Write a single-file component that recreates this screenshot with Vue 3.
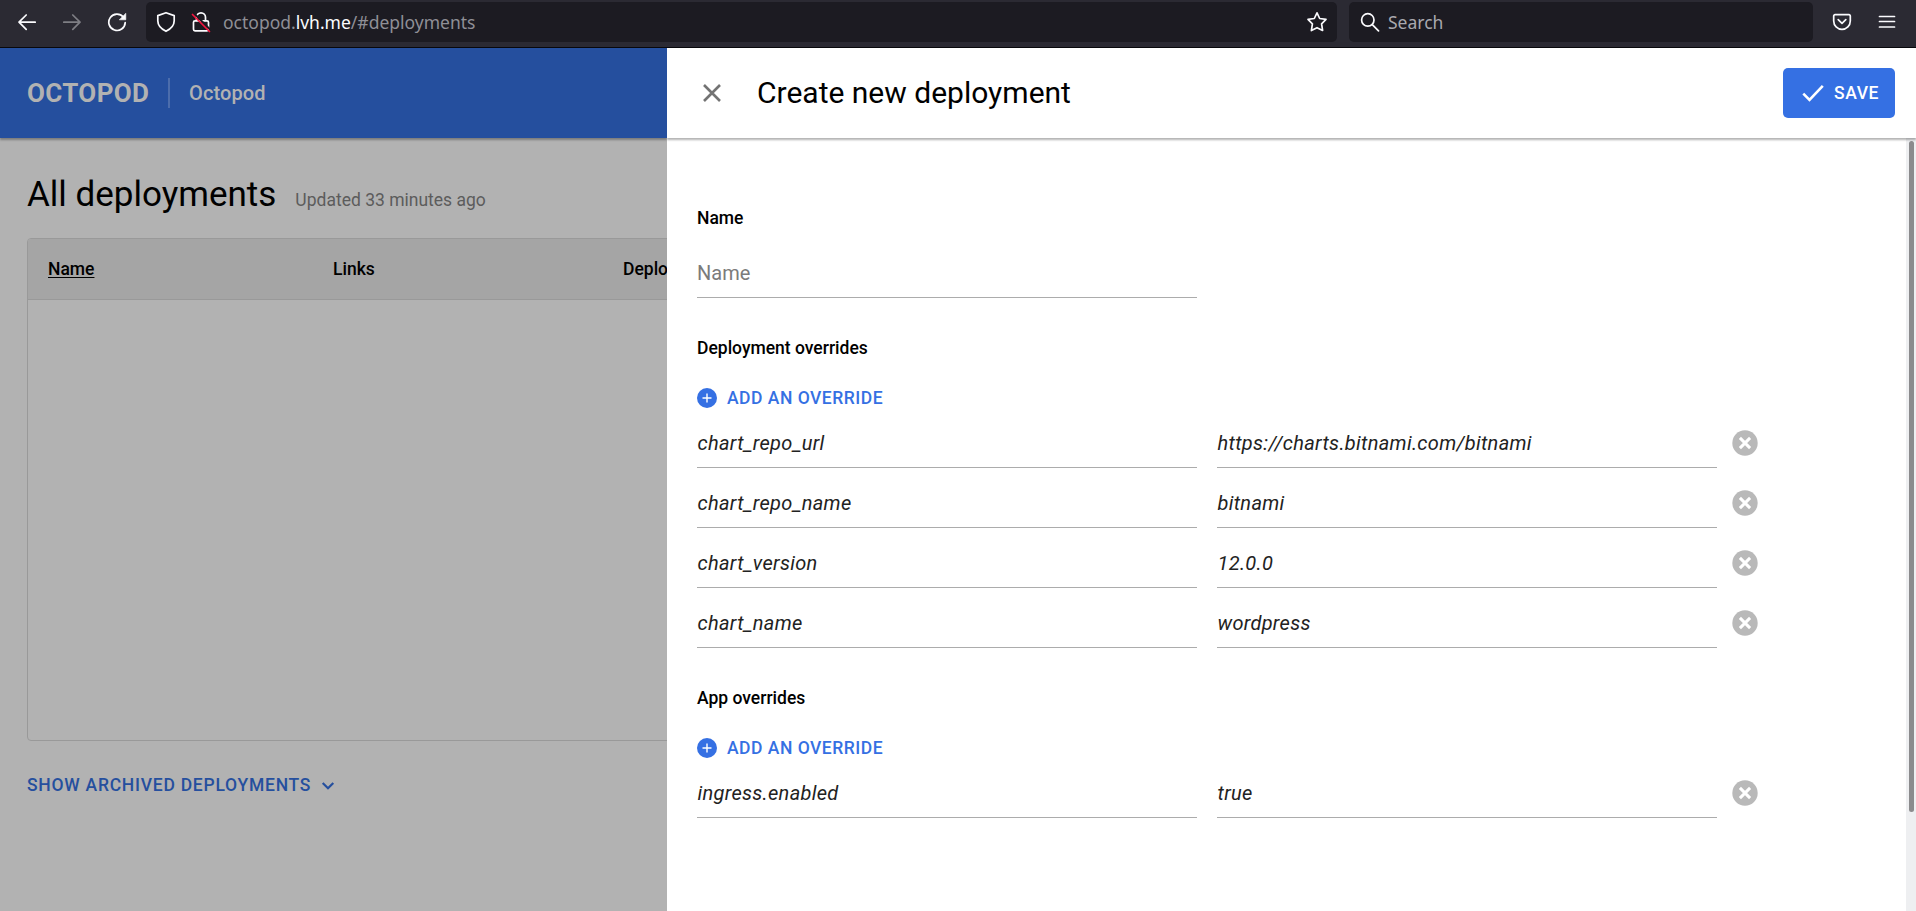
<script setup>
const columns = ['Name', 'Links', 'Deplo']

const sections = [
  {
    title: 'Deployment overrides',
    rows: [
      { key: 'chart_repo_url', value: 'https://charts.bitnami.com/bitnami' },
      { key: 'chart_repo_name', value: 'bitnami' },
      { key: 'chart_version', value: '12.0.0' },
      { key: 'chart_name', value: 'wordpress' },
    ],
  },
  {
    title: 'App overrides',
    rows: [{ key: 'ingress.enabled', value: 'true' }],
  },
]
</script>

<template>
  <div class="window">
    <div class="toolbar">
      <div class="nav">
        <svg width="20" height="20" viewBox="0 0 20 20"><path d="M18.2 10.2H2.2M9.2 3L2 10.2l7.200 7.200" /></svg>
        <svg class="faded" width="20" height="20" viewBox="0 0 20 20"><path d="M1.800 10.200h16M10.800 3l7.200 7.200-7.200 7.200" /></svg>
        <svg width="20" height="20" viewBox="0 0 20 20">
          <path d="M16.300 5A8.200 8.200 0 1 0 18.200 10.600" />
          <path class="solid" d="M18.800 1.600v6.200h-6.200z" />
        </svg>
      </div>
      <div class="urlbar">
        <svg width="20" height="22" viewBox="0 0 20 22"><path d="M10 1.700L18.200 4.600v5.200c0 5-3.600 8.300-8.200 10.500-4.600-2.200-8.200-5.500-8.200-10.500V4.600z" /></svg>
        <svg class="lock" width="20" height="22" viewBox="0 0 20 22">
          <path d="M5.500 9.500V6.300a4.500 4.500 0 0 1 9 0v3.200" />
          <rect x="2.500" y="9.800" width="15" height="10" rx="1.500" />
          <path class="halo" d="M3.400 2.700l17 17" />
          <path class="slash" d="M1.500 3.500l17 17" />
        </svg>
        <span class="url">octopod.<b>lvh.me</b>/#deployments</span>
        <svg class="star" width="22" height="22" viewBox="0 0 22 22"><path d="M11 1.800l2.700 5.700 6.300.9-4.400 4.400 1 6.700L11 16.700l-5.600 2.800 1-6.700L2 8.400l6.300-.9z" /></svg>
      </div>
      <div class="searchbar">
        <svg width="20" height="20" viewBox="0 0 20 20"><circle cx="7.800" cy="7.900" r="6.200" /><path d="M12.300 12.600l6.200 6.300" /></svg>
        <span>Search</span>
      </div>
      <svg class="pocket" width="20" height="18" viewBox="0 0 20 18">
        <path d="M3 1.700h14a1.300 1.300 0 0 1 1.300 1.300v5a8.300 8.300 0 0 1-16.600 0V3A1.300 1.300 0 0 1 3 1.700z" />
        <path d="M6.200 6.700l3.800 3.600 3.800-3.600" />
      </svg>
      <svg class="menu" width="18" height="14" viewBox="0 0 18 14"><path d="M1.500 1.500h15M1.500 6.500h15M1.500 12h15" /></svg>
    </div>

    <div class="body">
      <main class="page">
        <header class="brand">
          <span class="logo">OCTOPOD</span>
          <span class="project">Octopod</span>
        </header>
        <div class="content">
          <div class="heading">
            <h1>All deployments</h1>
            <span>Updated 33 minutes ago</span>
          </div>
          <div class="table">
            <div class="thead">
              <span v-for="(c, i) in columns" :key="c" :class="{ sorted: i === 0 }">{{ c }}</span>
            </div>
          </div>
          <div class="archived">
            SHOW ARCHIVED DEPLOYMENTS
            <svg width="14" height="10" viewBox="0 0 14 10"><path d="M1.700 2l5.300 5.300L12.300 2" /></svg>
          </div>
        </div>
      </main>

      <aside class="drawer">
        <header class="drawer-head">
          <svg class="close" width="20" height="20" viewBox="0 0 20 20"><path d="M2 2l16 16M18 2L2 18" /></svg>
          <h2>Create new deployment</h2>
          <button class="save">
            <svg width="24" height="20" viewBox="0 0 24 20"><path d="M2.300 10.600l6.200 6.200L21.800 2.800" /></svg>
            <span>SAVE</span>
          </button>
        </header>
        <div class="drawer-body">
          <div class="form">
            <h3>Name</h3>
            <div class="field empty">Name</div>
            <section v-for="s in sections" :key="s.title">
              <h3>{{ s.title }}</h3>
              <div class="add">
                <svg width="20" height="20" viewBox="0 0 20 20"><circle cx="10" cy="10" r="10" /><path d="M10 5.500v9M5.500 10h9" /></svg>
                <span>ADD AN OVERRIDE</span>
              </div>
              <div v-for="r in s.rows" :key="r.key" class="row">
                <div class="field">{{ r.key }}</div>
                <div class="field">{{ r.value }}</div>
                <svg width="26" height="26" viewBox="0 0 26 26"><circle cx="13" cy="13" r="12.700" /><path d="M7.900 7.900l10.200 10.200M18.100 7.900L7.900 18.100" /></svg>
              </div>
            </section>
          </div>
          <div class="track"><div class="thumb"></div></div>
        </div>
      </aside>
    </div>
  </div>
</template>

<style>
body { overflow: hidden; }
</style>

<style scoped>
* { box-sizing: border-box; }
h1, h2, h3 { margin: 0; }
svg { flex: none; fill: none; }
.window { width: 1916px; height: 911px; display: flex; flex-direction: column; font-family: Roboto, "Liberation Sans", sans-serif; overflow: hidden; }

.toolbar { height: 48px; flex: none; display: flex; align-items: flex-start; padding-top: 2px; background: #2b2a33; border-bottom: 1px solid #08080c; font-family: "Noto Sans", sans-serif; font-size: 17.500px; }
.toolbar svg { stroke: #fbfbfe; stroke-width: 1.700; stroke-linejoin: round; stroke-linecap: round; }
.nav { width: 146px; height: 40px; padding-left: 17px; display: flex; align-items: center; gap: 25px; }
.toolbar svg.faded { opacity: .4; }
.toolbar svg .solid { fill: #fbfbfe; stroke-width: .6; }
.urlbar { width: 1191px; height: 40px; background: #1c1b22; border-radius: 5px; display: flex; align-items: center; padding: 0 9px 0 10px; margin-right: 12px; }
.lock { margin-left: 15px; }
.toolbar svg .halo { stroke: #1c1b22; stroke-width: 2; }
.toolbar svg .slash { stroke: #f5143f; stroke-width: 1.700; }
.url { margin-left: 12px; color: #8f8f96; }
.url b { font-weight: 400; color: #fbfbfe; }
.star { margin-left: auto; }
.searchbar { width: 464px; height: 40px; background: #1c1b22; border-radius: 5px; display: flex; align-items: center; gap: 8px; padding-left: 11px; color: #a9a9af; }
.pocket { margin: 11px 0 0 19px; }
.menu { margin: 13px 0 0 26px; }

.body { flex: 1; min-height: 0; display: flex; }
.page { width: 667px; flex: none; background: #b2b2b2; overflow: hidden; }
.brand { height: 90px; background: #254f9e; box-shadow: 0 2px 2px rgba(0, 0, 0, .3); display: flex; align-items: center; padding-left: 27px; color: #b2b2b2; }
.logo { font-size: 26px; font-weight: 700; letter-spacing: .35px; width: 141px; }
.project { height: 30px; line-height: 30px; border-left: 2px solid #4c6dac; padding-left: 19px; font-size: 20px; font-weight: 500; letter-spacing: .1px; }
.content { padding-left: 27px; }
.heading { height: 100px; padding-top: 35px; display: flex; align-items: baseline; gap: 19px; }
.heading h1 { font-size: 35px; line-height: 43px; font-weight: 400; }
.heading span { font-size: 17.500px; color: #5c5c5c; }
.table { width: 1862px; height: 503px; border: 1px solid #999; border-radius: 4px; overflow: hidden; }
.thead { height: 61px; background: #a5a5a5; border-bottom: 1px solid #999; display: grid; grid-template-columns: 285px 290px 300px; align-items: center; padding: 0 0 1px 20px; font-size: 17.500px; font-weight: 500; }
.sorted { text-decoration: underline; text-underline-offset: 2px; }
.archived { margin-top: 34px; display: flex; align-items: center; gap: 10px; font-size: 17.500px; line-height: 21px; font-weight: 500; letter-spacing: .75px; color: #254f9e; }
.archived svg { stroke: #254f9e; stroke-width: 2.200; }

.drawer { flex: 1; background: #fff; display: flex; flex-direction: column; overflow: hidden; }
.drawer-head { height: 90px; flex: none; display: flex; align-items: center; padding: 0 21px 0 35px; box-shadow: 0 2px 2px rgba(0, 0, 0, .3); position: relative; }
.close { stroke: #737373; stroke-width: 2.600; }
.drawer-head h2 { margin-left: 35px; padding-bottom: 2px; font-size: 30px; font-weight: 400; }
.save { margin-left: auto; width: 112px; height: 50px; border: 0; border-radius: 5px; background: #3570e3; color: #fff; font: 500 17.500px Roboto, sans-serif; letter-spacing: .6px; display: flex; align-items: center; gap: 9px; padding: 0 0 0 18px; }
.save span, .add span { padding-bottom: 1px; }
.save svg { stroke: #fff; stroke-width: 2.600; }
.drawer-body { flex: 1; display: flex; justify-content: space-between; }
.form { padding: 69px 0 0 30px; }
h3 { font-size: 17.500px; line-height: 22px; font-weight: 500; }
.field { width: 500px; height: 50px; line-height: 51px; border-bottom: 1px solid #acacac; font-size: 20px; font-style: italic; letter-spacing: .3px; padding-left: .5px; color: #222; }
.field.empty { margin-top: 19px; font-style: normal; letter-spacing: 0; padding: 0; color: #7b7b7b; }
section { padding-top: 39px; }
.add { height: 20px; margin: 29px 0 10px; display: flex; align-items: center; gap: 10px; color: #3570e3; font-size: 17.500px; font-weight: 500; letter-spacing: .5px; }
.add circle { fill: #3570e3; }
.add path { stroke: #fff; stroke-width: 1.400; }
.row { display: flex; gap: 20px; }
.row + .row { margin-top: 10px; }
.row svg { margin: 12px 0 0 -5px; }
.row circle { fill: #b9b9b9; }
.row path { stroke: #fff; stroke-width: 3; }
.track { width: 10px; background: #eeeff1; padding: 3px 0 0 3px; }
.thumb { width: 5px; height: 671px; border-radius: 3px; background: #8b8b8d; }
</style>
